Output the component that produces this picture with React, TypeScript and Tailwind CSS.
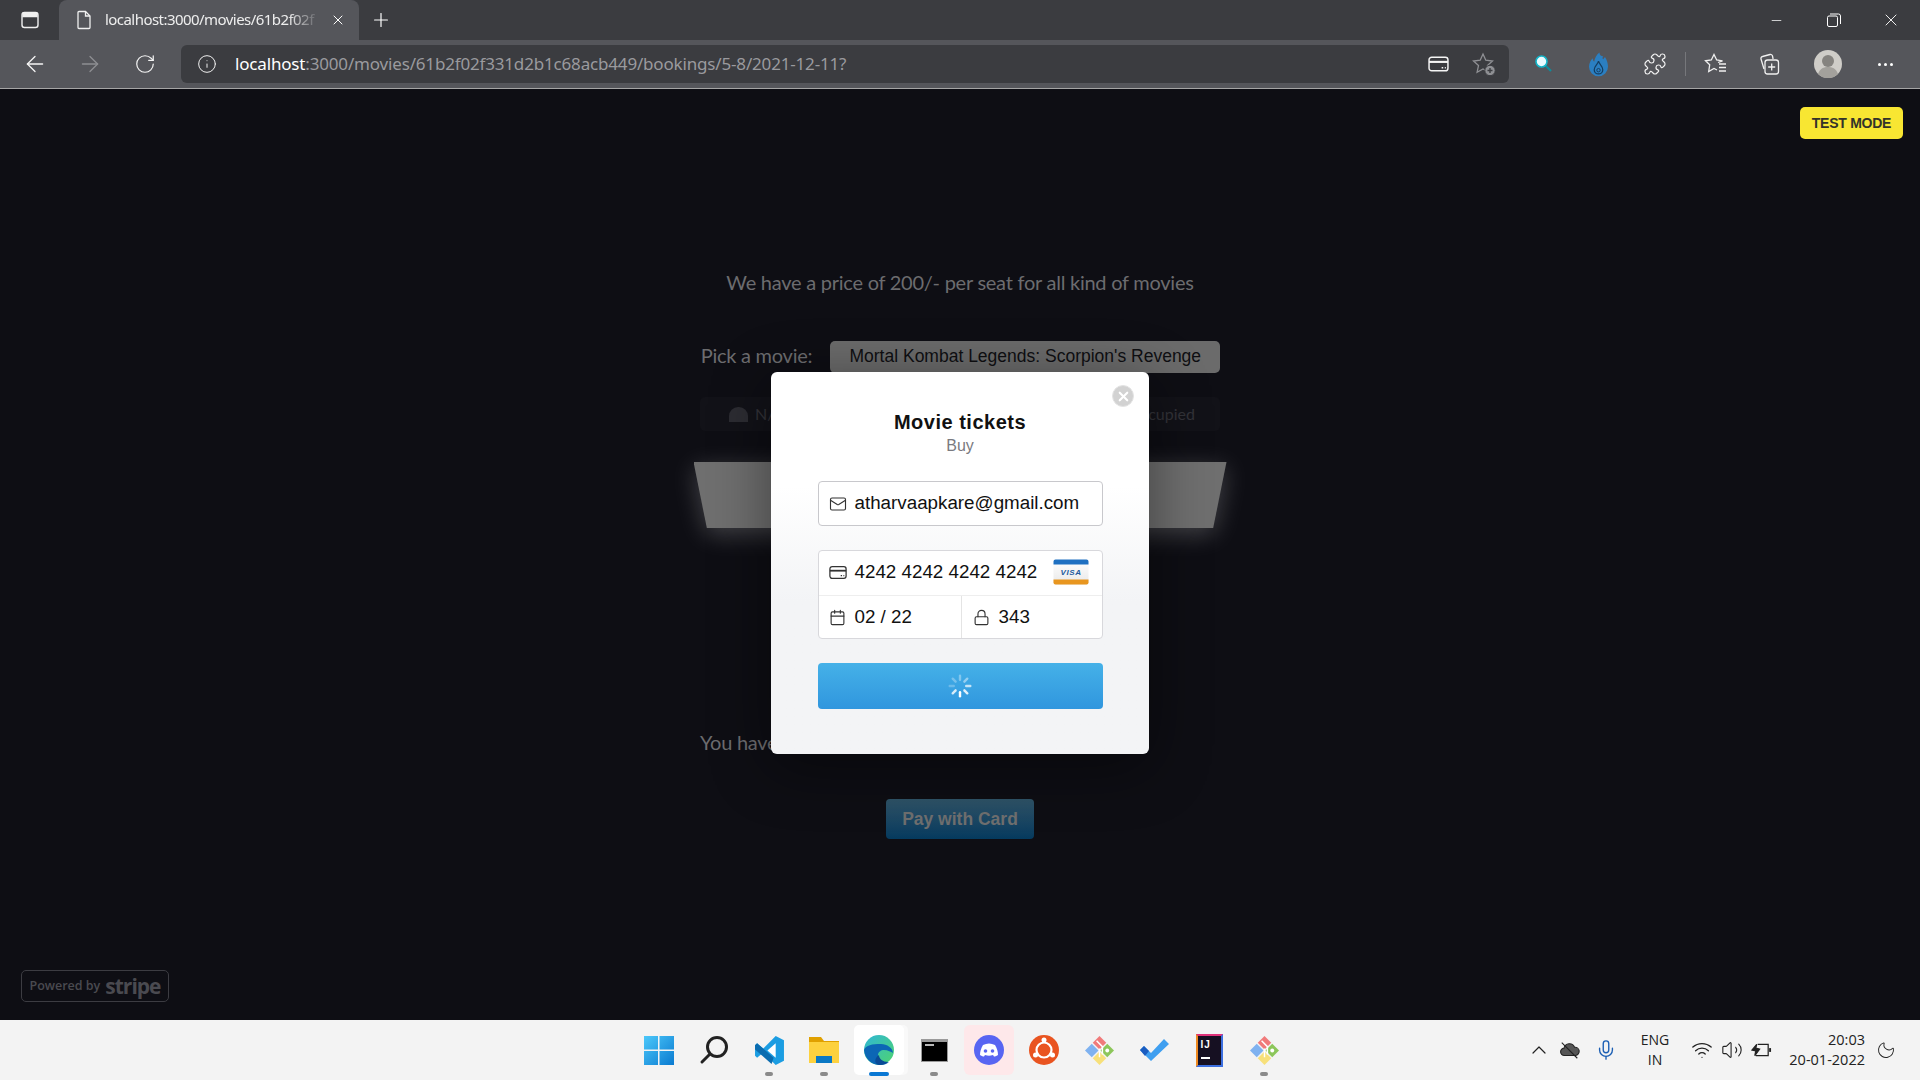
import { ArrowLeft, ArrowRight, Calendar, ChevronUp, Info, Lock, Mail, Mic, Minus, Moon, Plus, Puzzle, RotateCw, Volume2, Wifi, X } from "lucide-react";
import type { ReactNode } from "react";

function ToolButton({ children, className = "w-[55px]" }: { children: ReactNode; className?: string }) {
    return <div className={`${className} h-full flex items-center justify-center shrink-0`}>{children}</div>;
}

function CardIcon({ className, stroke = "currentColor" }: { className?: string; stroke?: string }) {
    return (
        <svg viewBox="0 0 20 16" className={className} fill="none" stroke={stroke} strokeWidth="1.4">
            <rect x="1" y="1.5" width="18" height="13" rx="2.5" />
            <path d="M1 6h18" strokeWidth="2" />
            <path d="M13 11.5h1.5M16 11.5h1" />
        </svg>
    );
}

function TabBar() {
    return (
        <div className="h-[40px] bg-[#3b3c40] flex items-end shrink-0">
            <div className="w-[59px] h-full flex items-center justify-center">
                <svg viewBox="0 0 20 20" className="w-[20px] h-[20px]" fill="none" stroke="#f0f0f0" strokeWidth="1.4">
                    <rect x="2" y="2.5" width="16" height="15" rx="2.5" />
                    <path d="M3 3.5h14v3H3z" fill="#f0f0f0" />
                </svg>
            </div>
            <div className="w-[300px] h-full bg-[#55565b] rounded-t-[8px] flex items-center pl-[17px] pr-[13px]">
                <svg viewBox="0 0 16 20" className="w-[16px] h-[20px] shrink-0" fill="none" stroke="#f0f0f0" strokeWidth="1.3">
                    <path d="M2 2.5a1 1 0 0 1 1-1h6.5l4.5 4.5v11.500a1 1 0 0 1-1 1H3a1 1 0 0 1-1-1z" />
                    <path d="M9.5 1.5V6H14" />
                </svg>
                <div className="ml-[13px] pb-[2px] w-[215px] overflow-hidden whitespace-nowrap text-[15px] tracking-[-0.55px] text-[#eeeeee] [mask-image:linear-gradient(to_right,black_85%,transparent)]">
                    localhost:3000/movies/61b2f02f
                </div>
                <X className="w-[16px] h-[16px] ml-[10px] text-white" strokeWidth={1.5} />
            </div>
            <div className="w-[44px] h-full flex items-center justify-center">
                <Plus className="w-[22px] h-[22px] text-white" strokeWidth={1.3} />
            </div>
            <div className="flex-1" />
            <div className="flex h-full items-center pr-[1px]">
                <ToolButton className="w-[57px]"><Minus className="w-[15px] h-[15px] text-white" strokeWidth={1.2} /></ToolButton>
                <ToolButton className="w-[57px]">
                    <svg viewBox="0 0 14 14" className="w-[14px] h-[14px]" fill="none" stroke="#fff" strokeWidth="1">
                        <rect x="0.5" y="3" width="10" height="10.5" rx="1.5" />
                        <path d="M3 1h8.5a2 2 0 0 1 2 2v8" />
                    </svg>
                </ToolButton>
                <ToolButton className="w-[57px]"><X className="w-[20px] h-[20px] text-white" strokeWidth={1.1} /></ToolButton>
            </div>
        </div>
    );
}

function AddressBar() {
    return (
        <div className="h-[49px] bg-[#55565b] border-b border-[#a5a5a5] flex items-center pl-[7px] shrink-0">
            <ToolButton><ArrowLeft className="w-[26px] h-[26px] text-[#f5f5f5]" strokeWidth={1.2} /></ToolButton>
            <ToolButton><ArrowRight className="w-[26px] h-[26px] text-[#8d8e92]" strokeWidth={1.2} /></ToolButton>
            <ToolButton><RotateCw className="w-[22px] h-[22px] text-[#f5f5f5]" strokeWidth={1.3} /></ToolButton>
            <div className="ml-[9px] w-[1328px] h-[38px] rounded-[6px] bg-[#3b3c40] flex items-center pl-[16px] pr-[13px]">
                <Info className="w-[20px] h-[20px] text-[#f0f0f0]" strokeWidth={1.2} />
                <div className="ml-[18px] text-[17px] tracking-[-0.17px] whitespace-nowrap text-[#9a9a9e]">
                    <span className="text-white">localhost</span>:3000/movies/61b2f02f331d2b1c68acb449/bookings/5-8/2021-12-11?
                </div>
                <div className="flex-1" />
                <CardIcon className="w-[21px] h-[18px] text-[#f5f5f5]" />
                <svg viewBox="0 0 24 24" className="ml-[23px] w-[24px] h-[24px]" fill="none" stroke="#8f9094" strokeWidth="1.3">
                    <path d="M11 2l2.800 6.200 6.700.8-5 4.600 1.400 6.600L11 17l-5.900 3.200 1.400-6.600-5-4.600 6.700-.8z" />
                    <circle cx="18" cy="18.500" r="5.200" fill="#8f9094" stroke="#3b3c40" strokeWidth="1" />
                    <path d="M18 16v5M15.500 18.500h5" stroke="#3b3c40" strokeWidth="1.400" />
                </svg>
            </div>
            <div className="ml-[7px] flex h-full items-center">
                <ToolButton>
                    <svg viewBox="0 0 20 20" className="w-[20px] h-[20px]">
                        <path d="M10 10l7 7" stroke="#0e8c9c" strokeWidth="2.2" />
                        <circle cx="7.5" cy="7.5" r="5.5" fill="#e9fbff" stroke="#12b5c9" strokeWidth="1.6" />
                    </svg>
                </ToolButton>
                <ToolButton>
                    <svg viewBox="0 0 20 26" className="w-[19px] h-[26px]">
                        <path d="M11 1c0 3 2 4 4 4-1 1-1 2 0 3 1-1 1-2 2-2 2 3 3 7 3 10a10 10 0 0 1-20 0c0-4 2-7 4-9 0 2 .5 3 1.500 3.500C6 7 8 3 11 1z" fill="#2b7fc2" />
                        <path d="M10 10c.5 3 4.500 5 4.500 9a4.500 4.500 0 0 1-9 0c0-4 3.500-5 4.500-9z" fill="none" stroke="#143d60" strokeWidth="1.300" />
                        <circle cx="10" cy="19.500" r="1.800" fill="none" stroke="#143d60" strokeWidth="1" />
                    </svg>
                </ToolButton>
                <ToolButton className="w-[57px]">
                    <Puzzle className="w-[24px] h-[24px] text-[#f0f0f0]" strokeWidth={1.2} />
                </ToolButton>
                <div className="w-px h-[24px] bg-[#76777b] mx-[2px]" />
                <ToolButton>
                    <svg viewBox="0 0 24 24" className="w-[24px] h-[24px]" fill="none" stroke="#f0f0f0" strokeWidth="1.3">
                        <path d="M14 10.500l4.500-1.700-5.800-.8L10 2.500 7.300 8l-5.800.8 4.200 4-1 6.700 5.300-3 3 1.500" />
                        <path d="M15 12h7M15 15.500h7M15 19h7" />
                    </svg>
                </ToolButton>
                <ToolButton>
                    <svg viewBox="0 0 24 24" className="w-[24px] h-[24px] -translate-x-[2px]" fill="none" stroke="#f0f0f0" strokeWidth="1.3">
                        <path d="M7 17L4 7a2 2 0 0 1 1.500-2.500L13 2.500a2 2 0 0 1 2.500 1.500l.6 3" />
                        <rect x="8" y="8" width="13.500" height="14" rx="2.500" />
                        <path d="M14.700 11.500v7M11.200 15h7" />
                    </svg>
                </ToolButton>
                <ToolButton className="w-[60px]">
                    <svg viewBox="0 0 28 28" className="w-[28px] h-[28px]">
                        <circle cx="14" cy="14" r="14" fill="#cfcdc8" />
                        <circle cx="14" cy="11" r="6" fill="#85837f" />
                        <path d="M4 24c2-6 6-7 10-7s8 1 10 7a14 14 0 0 1-20 0z" fill="#a3a19c" />
                    </svg>
                </ToolButton>
                <ToolButton className="w-[55px]">
                    <div className="flex gap-[3px]">
                        <span className="w-[3px] h-[3px] rounded-full bg-white" />
                        <span className="w-[3px] h-[3px] rounded-full bg-white" />
                        <span className="w-[3px] h-[3px] rounded-full bg-white" />
                    </div>
                </ToolButton>
            </div>
        </div>
    );
}

function Spinner() {
    const bars = [
        { angle: 0, opacity: 0.35 },
        { angle: 45, opacity: 0.45 },
        { angle: 90, opacity: 0.7 },
        { angle: 135, opacity: 0.85 },
        { angle: 180, opacity: 1 },
        { angle: 225, opacity: 0.8 },
        { angle: 270, opacity: 0.25 },
        { angle: 315, opacity: 0.3 },
    ];
    return (
        <svg viewBox="0 0 24 24" className="w-[24px] h-[24px]">
            {bars.map((b) => (
                <rect
                    key={b.angle}
                    x="10.800"
                    y="0.500"
                    width="2.400"
                    height="6.500"
                    rx="1.200"
                    fill="#fff"
                    opacity={b.opacity}
                    transform={`rotate(${b.angle} 12 12)`}
                />
            ))}
        </svg>
    );
}

function VisaCard() {
    return (
        <svg viewBox="0 0 36 26" className="w-[36px] h-[26px]">
            <defs>
                <linearGradient id="visaBody" x1="0" y1="0" x2="0" y2="1">
                    <stop offset="0" stopColor="#ffffff" />
                    <stop offset="1" stopColor="#e8e8e8" />
                </linearGradient>
            </defs>
            <rect x="0.500" y="0.500" width="35" height="25" rx="2" fill="url(#visaBody)" />
            <path d="M.5 5.500V2.500a2 2 0 0 1 2-2h31a2 2 0 0 1 2 2v3z" fill="#1f70c1" />
            <path d="M.5 20.500v3a2 2 0 0 0 2 2h31a2 2 0 0 0 2-2v-3z" fill="#e8961f" />
            <text x="18" y="16" textAnchor="middle" fontFamily="'Liberation Sans', sans-serif" fontSize="8" fontWeight="700" fontStyle="italic" letterSpacing="0.6" fill="#1d5a9c">VISA</text>
        </svg>
    );
}

function CheckoutModal() {
    return (
        <div className="absolute left-[771px] top-[283px] w-[378px] h-[382px] rounded-[6px] bg-gradient-to-b from-white to-[#f3f4f6] from-30% to-60% shadow-[0_12px_60px_rgba(0,0,0,0.45)] font-['Liberation_Sans',sans-serif] flex flex-col items-center pt-[38px]">
            <div className="absolute top-[13px] right-[15px] w-[22px] h-[22px] rounded-full bg-[#d2d2d2] border border-[#e4e4e4] flex items-center justify-center">
                <X className="w-[15px] h-[15px] text-white" strokeWidth={3.4} />
            </div>
            <h1 className="text-[20px] leading-[24px] font-bold tracking-[0.5px] text-[#111111]">Movie tickets</h1>
            <p className="mt-[2px] text-[16px] leading-[20px] text-[#7a7a80]">Buy</p>
            <div className="mt-[25px] w-[285px] h-[45px] rounded-[4px] bg-white border border-[#c8c8cc] flex items-center pl-[10px]">
                <Mail className="w-[18px] h-[18px] text-[#333333]" strokeWidth={1.5} />
                <span className="ml-[8px] text-[18.800px] text-[#111111]">atharvaapkare@gmail.com</span>
            </div>
            <div className="mt-[24px] w-[285px] h-[89px] rounded-[4px] bg-white border border-[#d8d8dc] flex flex-col">
                <div className="h-[45px] border-b border-[#eeeeee] flex items-center pl-[10px] pr-[13px] pb-[2px]">
                    <CardIcon className="w-[18px] h-[15px] text-[#333333]" />
                    <span className="ml-[8px] text-[18.800px] text-[#111111]">4242 4242 4242 4242</span>
                    <div className="flex-1" />
                    <VisaCard />
                </div>
                <div className="flex-1 flex">
                    <div className="w-[143px] border-r border-[#e4e4e4] flex items-center pl-[10px]">
                        <Calendar className="w-[17px] h-[17px] text-[#333333]" strokeWidth={1.6} />
                        <span className="ml-[9px] text-[18.800px] text-[#111111]">02 / 22</span>
                    </div>
                    <div className="flex-1 flex items-center pl-[11px]">
                        <Lock className="w-[17px] h-[17px] text-[#333333]" strokeWidth={1.6} />
                        <span className="ml-[9px] text-[18.800px] text-[#111111]">343</span>
                    </div>
                </div>
            </div>
            <button className="mt-[24px] w-[285px] h-[46px] rounded-[4px] bg-gradient-to-b from-[#45b1e8] to-[#3096de] flex items-center justify-center">
                <Spinner />
            </button>
        </div>
    );
}

function BookingPage() {
    return (
        <div className="flex flex-col items-center pt-[179px] font-['Lato',sans-serif]">
            <p className="text-[20px] leading-[28px] tracking-[-0.25px] text-[#6c6c6f]">We have a price of 200/- per seat for all kind of movies</p>
            <div className="mt-[44px] ml-[1px] flex items-center gap-[18px]">
                <span className="text-[20px] tracking-[-0.25px] pb-[3px] text-[#6c6c6f]">Pick a movie:</span>
                <div className="w-[390px] h-[32px] rounded-[5px] bg-[#6b6b6b] flex items-center justify-center font-['Liberation_Sans',sans-serif] text-[17.500px] text-[#0f0f12]">
                    Mortal Kombat Legends: Scorpion's Revenge
                </div>
            </div>
            <div className="mt-[24px] w-[520px] h-[34px] rounded-[5px] bg-[#121218] flex items-center justify-between pl-[29px] pr-[25px] text-[16px] text-[#333338]">
                <div className="flex items-center gap-[7px]">
                    <span className="w-[19px] h-[15px] rounded-t-[9px] bg-[#2c2c32]" />
                    <span>N/A</span>
                </div>
                <span>Occupied</span>
            </div>
            <div className="mt-[31px] drop-shadow-[0_6px_12px_rgba(255,255,255,0.22)]">
                <div className="w-[533px] h-[66px] bg-[#6f6f6f] [clip-path:polygon(0_0,100%_0,97.500%_100%,2.500%_100%)]" />
            </div>
            <p className="mt-[200px] self-start ml-[700px] text-[20px] leading-[28px] tracking-[-0.25px] text-[#6c6c6f]">You have selected 2 seats</p>
            <button className="mt-[43px] w-[148px] h-[40px] rounded-[4px] bg-gradient-to-b from-[#2f5468] to-[#043a5e] font-['Liberation_Sans',sans-serif] font-bold text-[17.500px] text-[#6f6f6f]">
                Pay with Card
            </button>
        </div>
    );
}

function TaskItem({ children, running, active }: { children: ReactNode; running?: boolean; active?: boolean }) {
    return (
        <div className={`relative w-[50px] h-[50px] mx-[2.500px] flex items-center justify-center rounded-[5px] ${active ? "bg-white shadow-[4px_0_0_#f9f9f9]" : ""}`}>
            {children}
            {running && <span className="absolute bottom-[-1px] left-1/2 -translate-x-1/2 w-[8px] h-[4px] rounded-full bg-[#8a8a8a]" />}
            {active && <span className="absolute bottom-[-1px] left-1/2 -translate-x-1/2 w-[20px] h-[4px] rounded-full bg-[#0a78d4]" />}
        </div>
    );
}

function GitIcon() {
    return (
        <svg viewBox="0 0 32 32" className="w-[31px] h-[31px]">
            <path d="M16 1l7 7-7 7-7-7z" fill="#f07a7a" />
            <path d="M24 9l7 7-7 7-7-7z" fill="#8cc65a" />
            <path d="M8 9l7 7-7 7-7-7z" fill="#7fb2f0" />
            <path d="M16 17l7 7-7 7-7-7z" fill="#f7e07a" />
            <path d="M13 6l6 6v8M16 14v9" stroke="#fff" strokeWidth="1.500" fill="none" />
            <circle cx="24" cy="16" r="2" fill="#fff" />
        </svg>
    );
}

function Taskbar() {
    return (
        <div className="h-[60px] bg-[#f3f3f3] relative flex items-center justify-center shrink-0 font-['Open_Sans',sans-serif] text-[#222222]">
            <div className="flex items-center pl-[3px]">
                <TaskItem>
                    <svg viewBox="0 0 30 30" className="w-[30px] h-[30px]">
                        <defs>
                            <linearGradient id="win" x1="0" y1="0" x2="1" y2="1">
                                <stop offset="0" stopColor="#4cc8fa" />
                                <stop offset="1" stopColor="#0a7ad0" />
                            </linearGradient>
                        </defs>
                        <path d="M0 1h14v13.500H0zM15.500 1H30v13.500H15.500zM0 16h14v14H0zM15.500 16H30v14H15.500z" fill="url(#win)" />
                    </svg>
                </TaskItem>
                <TaskItem>
                    <svg viewBox="0 0 30 30" className="w-[30px] h-[30px]" fill="none" stroke="#222" strokeWidth="3">
                        <circle cx="18" cy="12" r="9.500" />
                        <path d="M11 19l-8 8" strokeLinecap="round" />
                    </svg>
                </TaskItem>
                <TaskItem running>
                    <svg viewBox="0 0 30 30" className="w-[31px] h-[31px]">
                        <path d="M21 1l8 4v20l-8 4-12-12-6 5-2-2v-10l2-2 6 5z" fill="#1b9de2" />
                        <path d="M21 8l-8 7 8 7z" fill="#fff" />
                        <path d="M1 10l2-2 16 14-2 6-16-14z" fill="#0a6cb0" />
                    </svg>
                </TaskItem>
                <TaskItem running>
                    <svg viewBox="0 0 30 30" className="w-[30px] h-[30px]">
                        <path d="M0 2h12l3 4h15v6H0z" fill="#e0a000" />
                        <path d="M0 7h30v21H0z" fill="#fdd13e" />
                        <path d="M7 21h16v7H7z" fill="#0a78c4" />
                    </svg>
                </TaskItem>
                <TaskItem active>
                    <svg viewBox="0 0 30 30" className="w-[30px] h-[30px]">
                        <defs>
                            <linearGradient id="edge" x1="0" y1="0" x2="1" y2="1">
                                <stop offset="0" stopColor="#2fb6d6" />
                                <stop offset="1" stopColor="#4fd46e" />
                            </linearGradient>
                        </defs>
                        <circle cx="15" cy="15" r="15" fill="url(#edge)" />
                        <path d="M0 15C1 24 8 30 16 30c4 0 7-1 9-3-5 1-11-1-11-7 0-3 3-5 6-5 4 0 7 2 9 3 0-5-6-9-12-9C8 9 2 10 0 15z" fill="#0c66b5" />
                        <path d="M15 20c0 4 4 7 9 7-2 2-5 3-8 3-5 0-7-6-1-10z" fill="#0a4a96" />
                    </svg>
                </TaskItem>
                <TaskItem running>
                    <div className="w-[27px] h-[23px] bg-black border border-[#9a9a9a] border-t-[3px] flex items-start pl-[3px] pt-[2px]">
                        <span className="block w-[9px] h-[2px] bg-[#b8b8b8]" />
                    </div>
                </TaskItem>
                <TaskItem>
                    <div className="absolute inset-0 bg-[#fee8ea] rounded-[6px]" />
                    <svg viewBox="0 0 30 30" className="relative w-[30px] h-[30px]">
                        <circle cx="15" cy="15" r="15" fill="#5865f2" />
                        <path d="M9 10c4-2 8-2 12 0 2 3 3 7 3 10-2 1-3 1.500-4 1.500l-1-1.500c-3 1-5 1-8 0l-1 1.500c-1 0-2-.5-4-1.500 0-3 1-7 3-10z" fill="#fff" />
                        <circle cx="11.500" cy="16" r="1.800" fill="#5865f2" />
                        <circle cx="18.500" cy="16" r="1.800" fill="#5865f2" />
                    </svg>
                </TaskItem>
                <TaskItem>
                    <svg viewBox="0 0 30 30" className="w-[30px] h-[30px]">
                        <circle cx="15" cy="15" r="15" fill="#e95420" />
                        <circle cx="15" cy="15" r="7.500" fill="none" stroke="#fff" strokeWidth="2.200" />
                        <circle cx="15" cy="5" r="2.500" fill="#fff" />
                        <circle cx="6.500" cy="20" r="2.500" fill="#fff" />
                        <circle cx="23.500" cy="20" r="2.500" fill="#fff" />
                    </svg>
                </TaskItem>
                <TaskItem><GitIcon /></TaskItem>
                <TaskItem>
                    <svg viewBox="0 0 30 30" className="w-[30px] h-[30px]">
                        <path d="M12 26L1 15l4-4 7 7L25 4l5 5z" fill="#3f9ff0" />
                        <path d="M1 15l4-4 5 5-4 5z" fill="#1a5cc0" />
                    </svg>
                </TaskItem>
                <TaskItem>
                    <div className="relative w-[27px] h-[33px] bg-[#161022] border-2 border-[#3c6fe0] border-t-[#e0317a] border-l-[#f08a20] flex flex-col pl-[3px] pt-[3px]">
                        <span className="font-['Liberation_Sans',sans-serif] text-[10px] leading-[11px] font-bold tracking-[1px] text-white">IJ</span>
                        <span className="mt-[7px] block w-[9px] h-[2px] bg-white" />
                    </div>
                </TaskItem>
                <TaskItem running><GitIcon /></TaskItem>
            </div>

            <div className="absolute right-0 top-0 h-full flex items-center">
                <ChevronUp className="w-[24px] h-[24px] text-[#222222] mr-[8px]" strokeWidth={1.2} />
                <svg viewBox="0 0 24 20" className="w-[22px] h-[20px] mr-[14px]" fill="#555" stroke="#222" strokeWidth="1.200">
                    <path d="M6 16a4 4 0 0 1-.5-8A6 6 0 0 1 17 7a4.500 4.500 0 0 1 1 9z" />
                    <path d="M3 2l17 17" fill="none" />
                </svg>
                <Mic className="w-[22px] h-[22px] text-[#1c5fb4] mr-[13px]" strokeWidth={1.5} />
                <div className="w-[50px] text-center text-[14px] leading-[20px] mr-[11px]">ENG<br />IN</div>
                <Wifi className="w-[22px] h-[22px] mr-[8px]" strokeWidth={1.4} />
                <Volume2 className="w-[22px] h-[22px] mr-[8px]" strokeWidth={1.2} />
                <svg viewBox="0 0 22 16" className="w-[21px] h-[16px]" fill="none" stroke="#222" strokeWidth="1.300">
                    <path d="M7 2h11v12H5" />
                    <path d="M20 6v4" strokeWidth="2" />
                    <path d="M6 2L1 8l4 1-1 5 5-7-4-1z" fill="#222" />
                </svg>
                <div className="w-[90px] ml-[3px] text-right text-[14.500px] leading-[20px]">20:03<br />20-01-2022</div>
                <Moon className="w-[20px] h-[20px] ml-[11px] mr-[24px] -rotate-[15deg]" strokeWidth={1.1} />
            </div>
        </div>
    );
}

function App() {
    return (
        <div className="h-screen w-full overflow-hidden flex flex-col bg-[#0e0e14] font-['Noto_Sans',sans-serif]">
            <TabBar />
            <AddressBar />
            <main className="relative flex-1 overflow-hidden">
                <BookingPage />
                <div className="absolute top-[18px] right-[17px] w-[103px] h-[32px] rounded-[5px] bg-[#f8e632] flex items-center justify-center font-['Liberation_Sans',sans-serif] font-bold text-[14px] tracking-[-0.25px] text-[#33332a]">
                    TEST MODE
                </div>
                <div className="absolute left-[21px] bottom-[18px] w-[148px] h-[32px] rounded-[5px] border border-[#3c3c42] flex items-center justify-center gap-[5px] font-['Open_Sans',sans-serif] text-[#4a4a50]">
                    <span className="text-[12.500px] font-semibold">Powered by</span>
                    <span className="text-[21px] leading-[24px] font-bold tracking-[-1px]">stripe</span>
                </div>
                <CheckoutModal />
            </main>
            <Taskbar />
        </div>
    );
}

export default App;
